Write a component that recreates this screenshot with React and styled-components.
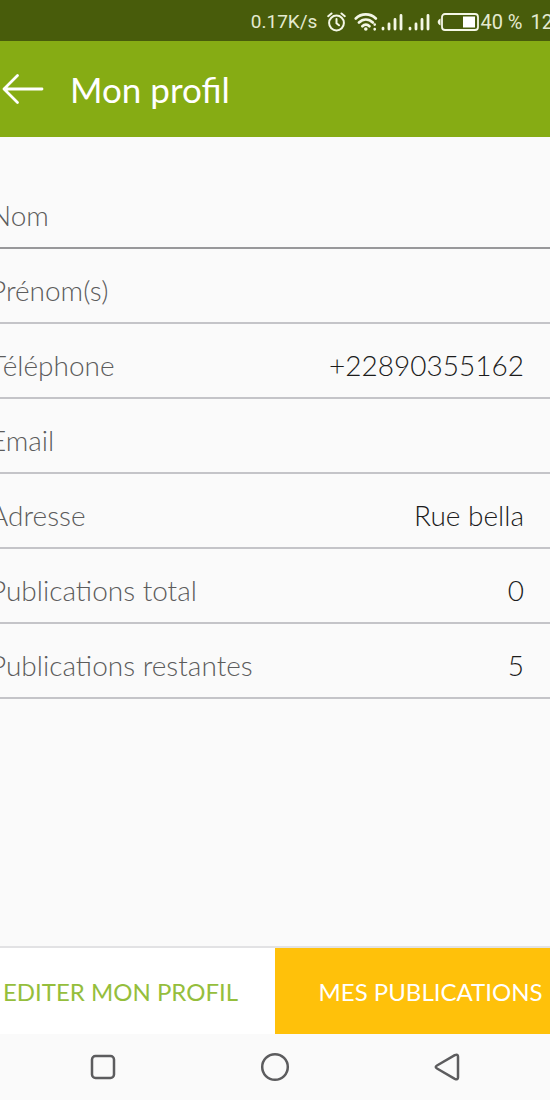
import React from "react";
import styled, { createGlobalStyle } from "styled-components";

const GlobalStyle = createGlobalStyle`
  * { box-sizing: border-box; }
  body { margin: 0; background: #fafafa; }
`;

const Screen = styled.div`
  display: flex;
  flex-direction: column;
  min-height: 100vh;
  overflow: hidden;
  background: #fafafa;
  font-family: "Lato", "Liberation Sans", sans-serif;
`;

const StatusBar = styled.div`
  display: flex;
  align-items: center;
  justify-content: flex-end;
  height: 41px;
  padding-top: 2px;
  margin-right: -3px;
  background: #485c0b;
  color: #e4ead0;
  font-family: "Roboto", sans-serif;
  line-height: 24px;
  white-space: nowrap;
`;

const StatusText = styled.span`
  margin-left: ${(p) => p.$gap || 0}px;
  font-size: ${(p) => (p.$small ? 19 : 20)}px;
`;

const StatusIcon = styled.svg`
  flex: none;
  margin-left: ${(p) => p.$gap || 0}px;
`;

const Header = styled.header`
  display: flex;
  align-items: center;
  gap: 25px;
  height: 96px;
  padding: 0 2px;
  background: #86ac14;
`;

const BackButton = styled.button`
  display: flex;
  padding: 0;
  border: 0;
  background: none;
`;

const Title = styled.h1`
  margin: 0;
  color: #fff;
  font-size: 35px;
  font-weight: 400;
  line-height: 44px;
`;

const Fields = styled.dl`
  flex: 1;
  margin: 37px 0 0 -10px;
`;

const Field = styled.div`
  display: flex;
  justify-content: space-between;
  align-items: flex-end;
  height: 75px;
  padding: 0 26px 14px 0;
  border-bottom: 2px solid #c4c4c8;
  font-size: 28px;
  font-weight: 300;
  line-height: 36px;

  &:first-child { border-bottom-color: #98989a; }
`;

const Label = styled.dt`
  color: #5c5c5c;
`;

const Value = styled.dd`
  margin: 0;
  color: #1c1c1c;
`;

const Actions = styled.div`
  display: grid;
  grid-template-columns: repeat(2, minmax(0, 1fr));
  border-top: 2px solid #e2e2e4;
`;

const Action = styled.button`
  height: 86px;
  padding: ${(p) => (p.$primary ? "2px 0 0 36px" : "2px 34px 0 0")};
  border: 0;
  background: ${(p) => (p.$primary ? "#ffc10a" : "#fff")};
  color: ${(p) => (p.$primary ? "#fff" : "#95be3c")};
  font-family: inherit;
  font-size: 24px;
  line-height: 32px;
  white-space: nowrap;
`;

const SystemNav = styled.nav`
  display: flex;
  justify-content: center;
  align-items: center;
  gap: 142px;
  height: 66px;
`;

const NavButton = styled.button`
  display: flex;
  padding: 0;
  border: 0;
  background: none;
`;

const fields = [
  ["Nom", ""],
  ["Prénom(s)", ""],
  ["Téléphone", "+22890355162"],
  ["Email", ""],
  ["Adresse", "Rue bella"],
  ["Publications total", "0"],
  ["Publications restantes", "5"],
];

function Signal({ gap }) {
  return (
    <StatusIcon $gap={gap} width="22" height="18" viewBox="0 0 22 18" stroke="#f4f7e6" strokeWidth="2.8" strokeLinecap="round">
      <path d="M2 15.2v.8M8 11v5M14 6.5v9.500M20 2.500v13.500" />
    </StatusIcon>
  );
}

export default function App() {
  return (
    <>
      <GlobalStyle />
      <Screen>
        <StatusBar>
          <StatusText $small>0.17K/s</StatusText>
          <StatusIcon $gap={10} width="19" height="20" viewBox="0 0 19 20" fill="none" stroke="#f4f7e6" strokeWidth="2" strokeLinecap="round">
            <circle cx="9.5" cy="11" r="7.4" />
            <path d="M9.5 7v4.3l2.5 2M1.2 4.2 4.5 1.5M17.8 4.2l-3.3-2.7" />
          </StatusIcon>
          <StatusIcon $gap={8} width="24" height="20" viewBox="0 0 24 20" fill="none" stroke="#f4f7e6" strokeWidth="2.7" strokeLinecap="round">
            <path d="M1.8 6.5c5.5-5.4 14.500-5.4 20 0M5 10.500c4-4 9.800-4 13.800 0M8.400 14.200c2-2 5-2 7 0" />
            <circle cx="11.8" cy="17" r="1.8" fill="#f4f7e6" stroke="none" />
            <path d="M20.7 12.500v.1M20.700 17.200v.1" />
          </StatusIcon>
          <Signal gap={3} />
          <Signal gap={5} />
          <StatusIcon $gap={7} width="42" height="18" viewBox="0 0 42 18">
            <path d="M3.5 5.5C-.2 7-.2 11 3.5 12.5z" fill="#f4f7e6" />
            <rect x="5" y="1" width="36" height="16" rx="3" fill="none" stroke="#f4f7e6" strokeWidth="1.8" />
            <rect x="26" y="3.5" width="12" height="11" fill="#fff" />
          </StatusIcon>
          <StatusText $gap={1}>40 %</StatusText>
          <StatusText $gap={8}>12</StatusText>
        </StatusBar>
        <Header>
          <BackButton aria-label="Retour">
            <svg width="43" height="32" viewBox="0 0 43 32" fill="none" stroke="#fff" strokeWidth="2.8" strokeLinecap="round" strokeLinejoin="round">
              <path d="M15.5 2.5 2 16l13.5 13.5M2 16h38" />
            </svg>
          </BackButton>
          <Title>Mon profil</Title>
        </Header>
        <Fields>
          {fields.map(([label, value]) => (
            <Field key={label}>
              <Label>{label}</Label>
              <Value>{value}</Value>
            </Field>
          ))}
        </Fields>
        <Actions>
          <Action>EDITER MON PROFIL</Action>
          <Action $primary>MES PUBLICATIONS</Action>
        </Actions>
        <SystemNav>
          <NavButton aria-label="Applications récentes">
            <svg width="30" height="30" viewBox="0 0 30 30" fill="none" stroke="#5c5c5e" strokeWidth="2.5">
              <rect x="4" y="4" width="22" height="22" rx="3.5" />
            </svg>
          </NavButton>
          <NavButton aria-label="Accueil">
            <svg width="30" height="30" viewBox="0 0 30 30" fill="none" stroke="#5c5c5e" strokeWidth="2.5">
              <circle cx="15" cy="15" r="12.8" />
            </svg>
          </NavButton>
          <NavButton aria-label="Précédent">
            <svg width="30" height="30" viewBox="0 0 30 30" fill="none" stroke="#5c5c5e" strokeWidth="2.5" strokeLinejoin="round">
              <path d="M5 13.5 22.8 3.2Q26 1.8 26 4.5v21q0 2.7-3.2 1.3L5 16.5Q2.5 15 5 13.5z" />
            </svg>
          </NavButton>
        </SystemNav>
      </Screen>
    </>
  );
}
